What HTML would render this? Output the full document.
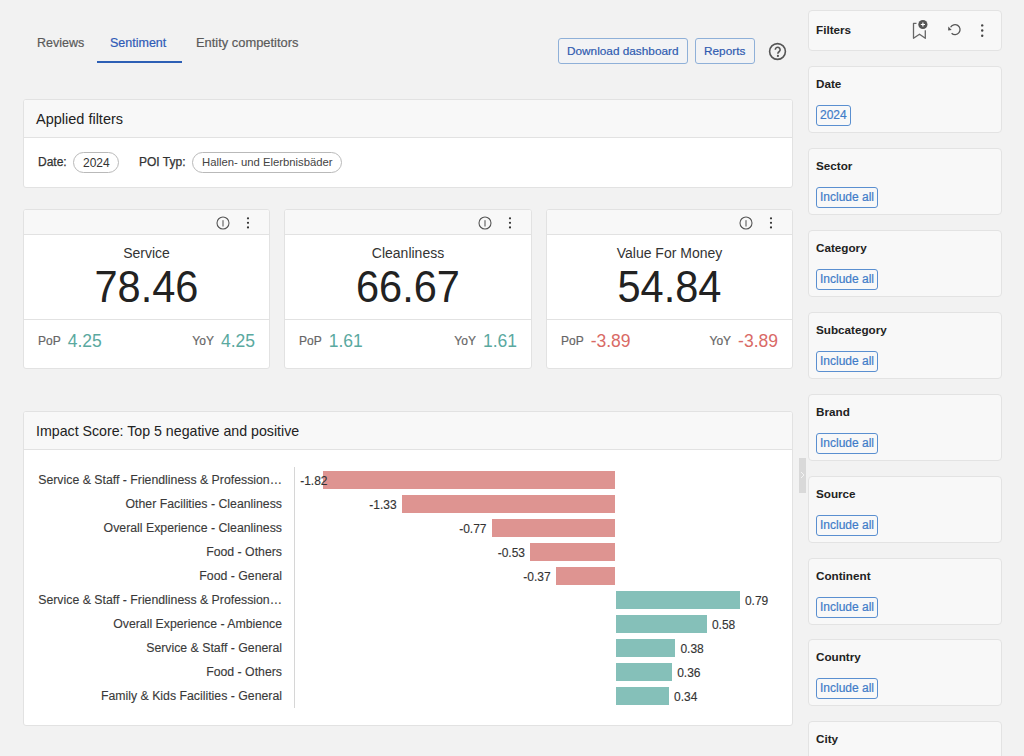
<!DOCTYPE html>
<html><head><meta charset="utf-8">
<style>
*{box-sizing:border-box;margin:0;padding:0}
html,body{width:1024px;height:756px;overflow:hidden;background:#f2f2f2;font-family:"Liberation Sans",sans-serif;color:#222}
.abs{position:absolute}
.t{position:absolute;white-space:nowrap;line-height:1}
.card{position:absolute;background:#fff;border:1px solid #e2e2e2;border-radius:3px;overflow:hidden}
.hdr{position:absolute;left:0;right:0;top:0;background:#f8f8f8;border-bottom:1px solid #e2e2e2}
.tab{font-size:12.5px;color:#5a5a5a;-webkit-text-stroke:0.2px currentColor}
.btn{position:absolute;border:1px solid #8fb0d8;border-radius:3px;background:#f2f3f5;color:#2f5bb0;font-size:11.8px;-webkit-text-stroke:0.2px currentColor;top:38px;height:26px}
.chip{position:absolute;border:1px solid #b9b9b9;border-radius:11px;height:21px;font-size:12px;color:#333;background:#fff}
.fc{position:absolute;left:808px;width:194px;height:67px;background:#f8f8f8;border:1px solid #e3e3e3;border-radius:4px}
.fc .ft{position:absolute;left:7px;top:11px;font-size:11.7px;font-weight:bold;color:#222;line-height:1}
.fc .ic{position:absolute;left:7px;top:38px;height:21px;border:1px solid #5a8fd0;border-radius:3px;color:#3f7cc8;font-size:12px;line-height:19px;padding:0 3px;-webkit-text-stroke:0.2px currentColor}
.lbl{position:absolute;font-size:12.3px;color:#3a3a3a;-webkit-text-stroke:0.12px currentColor;white-space:nowrap;line-height:1}
.bar{position:absolute;height:18px}
.neg{background:#de9491}
.pos{background:#85c0b9}
.kt{font-size:14px;color:#333}
.kn{font-size:43.5px;color:#222;transform:scaleX(0.955)}
.row{position:absolute;top:121px;height:20px;display:flex;align-items:center;white-space:nowrap;line-height:20px}
.kp{font-size:12px;color:#666;-webkit-text-stroke:0.2px currentColor;margin-right:7px;line-height:12px}
.kv{font-size:17.5px;line-height:18px}
.val{position:absolute;font-size:12px;color:#333;-webkit-text-stroke:0.12px currentColor;white-space:nowrap;line-height:1}
</style></head><body>

<!-- tabs -->
<div class="t tab" style="left:37px;top:37px">Reviews</div>
<div class="t tab" style="left:110px;top:37px;color:#2f5bb7">Sentiment</div>
<div class="t tab" style="left:196px;top:37px;font-size:12.9px">Entity competitors</div>
<div class="abs" style="left:97px;top:61px;width:85px;height:2px;background:#2d5fb5"></div>

<div class="btn" style="left:558px;width:130px"><span class="t" style="left:8px;top:7px">Download dashboard</span></div>
<div class="btn" style="left:695px;width:60px"><span class="t" style="left:8px;top:7px">Reports</span></div>
<svg class="abs" style="left:768px;top:42px" width="19" height="19" viewBox="0 0 19 19">
<circle cx="9.5" cy="9.5" r="7.9" fill="none" stroke="#555" stroke-width="1.6"/>
<path d="M7.3 7.7A2.4 2.4 0 1 1 11.3 9.5C10.4 10.1 9.9 10.5 9.9 11.5V11.8" fill="none" stroke="#555" stroke-width="1.6"/>
<circle cx="9.9" cy="13.9" r="1.1" fill="#555"/>
</svg>

<!-- applied filters -->
<div class="card" style="left:23px;top:99px;width:770px;height:89px">
  <div class="hdr" style="height:38px"><span class="t" style="left:12px;top:12px;font-size:14.5px;color:#222">Applied filters</span></div>
  <span class="t" style="left:14px;top:56px;font-size:12px;color:#333;-webkit-text-stroke:0.25px currentColor">Date:</span>
  <div class="chip" style="left:49px;top:52px;width:46px"><span class="t" style="left:9px;top:4px">2024</span></div>
  <span class="t" style="left:115px;top:56px;font-size:12px;color:#333;-webkit-text-stroke:0.25px currentColor">POI Typ:</span>
  <div class="chip" style="left:168px;top:52px;width:150px"><span class="t" style="left:9px;top:4px;font-size:11.3px;color:#444">Hallen- und Elerbnisbäder</span></div>
</div>

<!-- KPI cards -->
<div class="card" style="left:23px;top:209px;width:247px;height:160px">
  <div class="hdr" style="height:25px">
    <svg class="abs" style="left:192.3px;top:5.9px" width="14" height="14" viewBox="0 0 14 14"><circle cx="7" cy="7" r="6" fill="none" stroke="#555" stroke-width="1.1"/><path d="M7 4.2V10.5" stroke="#444" stroke-width="0.95"/></svg>
    <svg class="abs" style="left:222.1px;top:6px" width="4" height="14" viewBox="0 0 4 14"><circle cx="2" cy="2.3" r="1.1" fill="#333"/><circle cx="2" cy="6.8" r="1.1" fill="#333"/><circle cx="2" cy="11.4" r="1.1" fill="#333"/></svg>
  </div>
  <div class="t kt" style="left:0;width:245px;top:36px;text-align:center">Service</div>
  <div class="t kn" style="left:0;width:245px;top:56px;text-align:center">78.46</div>
  <div class="abs" style="left:0;right:0;top:109px;height:1px;background:#e2e2e2"></div>
  <div class="row" style="left:14px"><span class="kp">PoP</span><span class="kv" style="color:#5aa99f">4.25</span></div>
  <div class="row" style="right:14px"><span class="kp">YoY</span><span class="kv" style="color:#5aa99f">4.25</span></div>
</div>
<div class="card" style="left:284px;top:209px;width:248px;height:160px">
  <div class="hdr" style="height:25px">
    <svg class="abs" style="left:193.3px;top:5.9px" width="14" height="14" viewBox="0 0 14 14"><circle cx="7" cy="7" r="6" fill="none" stroke="#555" stroke-width="1.1"/><path d="M7 4.2V10.5" stroke="#444" stroke-width="0.95"/></svg>
    <svg class="abs" style="left:223.1px;top:6px" width="4" height="14" viewBox="0 0 4 14"><circle cx="2" cy="2.3" r="1.1" fill="#333"/><circle cx="2" cy="6.8" r="1.1" fill="#333"/><circle cx="2" cy="11.4" r="1.1" fill="#333"/></svg>
  </div>
  <div class="t kt" style="left:0;width:246px;top:36px;text-align:center">Cleanliness</div>
  <div class="t kn" style="left:0;width:246px;top:56px;text-align:center">66.67</div>
  <div class="abs" style="left:0;right:0;top:109px;height:1px;background:#e2e2e2"></div>
  <div class="row" style="left:14px"><span class="kp">PoP</span><span class="kv" style="color:#5aa99f">1.61</span></div>
  <div class="row" style="right:14px"><span class="kp">YoY</span><span class="kv" style="color:#5aa99f">1.61</span></div>
</div>
<div class="card" style="left:546px;top:209px;width:247px;height:160px">
  <div class="hdr" style="height:25px">
    <svg class="abs" style="left:192.3px;top:5.9px" width="14" height="14" viewBox="0 0 14 14"><circle cx="7" cy="7" r="6" fill="none" stroke="#555" stroke-width="1.1"/><path d="M7 4.2V10.5" stroke="#444" stroke-width="0.95"/></svg>
    <svg class="abs" style="left:222.1px;top:6px" width="4" height="14" viewBox="0 0 4 14"><circle cx="2" cy="2.3" r="1.1" fill="#333"/><circle cx="2" cy="6.8" r="1.1" fill="#333"/><circle cx="2" cy="11.4" r="1.1" fill="#333"/></svg>
  </div>
  <div class="t kt" style="left:0;width:245px;top:36px;text-align:center">Value For Money</div>
  <div class="t kn" style="left:0;width:245px;top:56px;text-align:center">54.84</div>
  <div class="abs" style="left:0;right:0;top:109px;height:1px;background:#e2e2e2"></div>
  <div class="row" style="left:14px"><span class="kp">PoP</span><span class="kv" style="color:#d96a66">-3.89</span></div>
  <div class="row" style="right:14px"><span class="kp">YoY</span><span class="kv" style="color:#d96a66">-3.89</span></div>
</div>

<!-- impact score -->
<div class="card" style="left:23px;top:411px;width:770px;height:315px">
  <div class="hdr" style="height:38px"><span class="t" style="left:12px;top:11.5px;font-size:14.2px;color:#222">Impact Score: Top 5 negative and positive</span></div>
</div>

<!-- chart -->
<div class="abs" style="left:294px;top:467px;width:1px;height:241px;background:#d6d6d6"></div>
<div class="lbl" style="left:0;width:282px;text-align:right;top:474px">Service &amp; Staff - Friendliness &amp; Profession…</div>
<div class="bar neg" style="left:323.0px;top:471px;width:292.0px"></div>
<div class="val" style="right:696.5px;top:475px">-1.82</div>
<div class="lbl" style="left:0;width:282px;text-align:right;top:498px">Other Facilities - Cleanliness</div>
<div class="bar neg" style="left:401.6px;top:495px;width:213.4px"></div>
<div class="val" style="right:627.4px;top:499px">-1.33</div>
<div class="lbl" style="left:0;width:282px;text-align:right;top:522px">Overall Experience - Cleanliness</div>
<div class="bar neg" style="left:491.5px;top:519px;width:123.5px"></div>
<div class="val" style="right:537.5px;top:523px">-0.77</div>
<div class="lbl" style="left:0;width:282px;text-align:right;top:546px">Food - Others</div>
<div class="bar neg" style="left:530.0px;top:543px;width:85.0px"></div>
<div class="val" style="right:499.0px;top:547px">-0.53</div>
<div class="lbl" style="left:0;width:282px;text-align:right;top:570px">Food - General</div>
<div class="bar neg" style="left:555.6px;top:567px;width:59.4px"></div>
<div class="val" style="right:473.4px;top:571px">-0.37</div>
<div class="lbl" style="left:0;width:282px;text-align:right;top:594px">Service &amp; Staff - Friendliness &amp; Profession…</div>
<div class="bar pos" style="left:615.5px;top:591px;width:124.4px"></div>
<div class="val" style="left:744.9px;top:595px">0.79</div>
<div class="lbl" style="left:0;width:282px;text-align:right;top:618px">Overall Experience - Ambience</div>
<div class="bar pos" style="left:615.5px;top:615px;width:91.3px"></div>
<div class="val" style="left:711.9px;top:619px">0.58</div>
<div class="lbl" style="left:0;width:282px;text-align:right;top:642px">Service &amp; Staff - General</div>
<div class="bar pos" style="left:615.5px;top:639px;width:59.9px"></div>
<div class="val" style="left:680.4px;top:643px">0.38</div>
<div class="lbl" style="left:0;width:282px;text-align:right;top:666px">Food - Others</div>
<div class="bar pos" style="left:615.5px;top:663px;width:56.7px"></div>
<div class="val" style="left:677.2px;top:667px">0.36</div>
<div class="lbl" style="left:0;width:282px;text-align:right;top:690px">Family &amp; Kids Facilities - General</div>
<div class="bar pos" style="left:615.5px;top:687px;width:53.6px"></div>
<div class="val" style="left:674.0px;top:691px">0.34</div>

<!-- right panel -->
<div class="fc" style="top:10px;height:41px">
  <span class="ft" style="top:13px">Filters</span>
</div>
<div class="fc" style="top:66.40px"><span class="ft">Date</span><span class="ic">2024</span></div>
<div class="fc" style="top:148.27px"><span class="ft">Sector</span><span class="ic">Include all</span></div>
<div class="fc" style="top:230.14px"><span class="ft">Category</span><span class="ic">Include all</span></div>
<div class="fc" style="top:312.01px"><span class="ft">Subcategory</span><span class="ic">Include all</span></div>
<div class="fc" style="top:393.88px"><span class="ft">Brand</span><span class="ic">Include all</span></div>
<div class="fc" style="top:475.75px"><span class="ft">Source</span><span class="ic">Include all</span></div>
<div class="fc" style="top:557.62px"><span class="ft">Continent</span><span class="ic">Include all</span></div>
<div class="fc" style="top:639.49px"><span class="ft">Country</span><span class="ic">Include all</span></div>
<div class="fc" style="top:721.36px"><span class="ft">City</span></div>

<svg class="abs" style="left:906px;top:16px" width="30" height="30" viewBox="0 0 30 30">
<path d="M10.5 7.3H7.5V22.3L13.5 18.2L19.3 22.3V14.3" fill="none" stroke="#666" stroke-width="1.3" stroke-linejoin="round"/>
<circle cx="16.9" cy="8.5" r="4.6" fill="#555"/>
<path d="M14.8 8.5H19M16.9 6.4V10.6" stroke="#fff" stroke-width="1.2"/>
</svg>
<svg class="abs" style="left:940px;top:16px" width="30" height="30" viewBox="0 0 30 30">
<path d="M11.6 17.2A5 5 0 1 0 10.6 11.3" fill="none" stroke="#555" stroke-width="1.3"/>
<path d="M8.1 14.4L8.3 10.6L11.7 13.9Z" fill="#555"/>
</svg>
<svg class="abs" style="left:979px;top:20px" width="6" height="20" viewBox="0 0 6 20">
<circle cx="3.2" cy="5.4" r="1.2" fill="#444"/><circle cx="3.2" cy="10.5" r="1.2" fill="#444"/><circle cx="3.2" cy="15.7" r="1.2" fill="#444"/>
</svg>
<div class="abs" style="left:799px;top:458px;width:7px;height:35px;background:#d9d9d9"></div>
<svg class="abs" style="left:799px;top:468px" width="7" height="14" viewBox="0 0 7 14"><path d="M2 4L5 7L2 10" fill="none" stroke="#f4f4f4" stroke-width="1"/></svg>

</body></html>
